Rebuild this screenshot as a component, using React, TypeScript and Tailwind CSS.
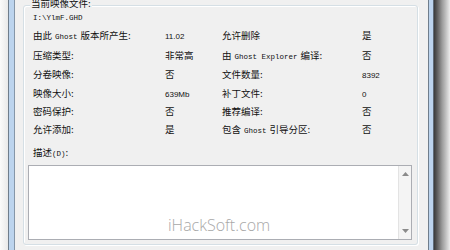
import type { ReactNode } from "react";

const Mono = ({ children }: { children: ReactNode }) => (
  <span className="font-['Liberation_Mono',monospace] text-[7.5px]">{children}</span>
);

const Num = ({ children }: { children: ReactNode }) => (
  <span className="font-['Liberation_Sans',sans-serif] text-[8px]">{children}</span>
);

const Word = ({ children }: { children: ReactNode }) => (
  <span className="mx-[3px] font-['Liberation_Mono',monospace] text-[7.5px]">{children}</span>
);

const rows: [ReactNode, ReactNode, ReactNode, ReactNode][] = [
  [<>由此<Word>Ghost</Word>版本所产生:</>, <Num>11.02</Num>, "允许删除", "是"],
  ["压缩类型:", "非常高", <>由<Word>Ghost Explorer</Word>编译:</>, "否"],
  ["分卷映像:", "否", "文件数量:", <Num>8392</Num>],
  ["映像大小:", <Num>639Mb</Num>, "补丁文件:", <Num>0</Num>],
  ["密码保护:", "否", "推荐编译:", "否"],
  ["允许添加:", "是", <>包含<Word>Ghost</Word>引导分区:</>, "否"],
];

const Arrow = ({ up }: { up?: boolean }) => (
  <svg width="7" height="4" viewBox="0 0 7 4">
    <path d={up ? "M0 4 L3.5 0 L7 4 Z" : "M0 0 L3.5 4 L7 0 Z"} fill="#8a8a8a" />
  </svg>
);

const App = () => {
  return (
    <div className="flex h-[250px] w-[450px] overflow-hidden bg-[#f0f0f0] font-['Noto_Sans_CJK_SC',sans-serif] text-[9.5px] text-[#111]">
      {/* left window frame */}
      <div className="w-[8px] bg-gradient-to-r from-[#fbfbfb] to-[#e9e9e9]" />
      <div className="w-[1px] bg-[#6f7d8c]" />
      <div className="w-[5px] bg-[#bcd4ee]" />
      <div className="w-[1px] bg-[#8596a8]" />

      <div className="flex w-[413px] flex-col pl-[8px] pr-[10px]">
        <div className="relative mt-[5px] rounded-[3px] border border-[#d5dfe5] pb-[4px] pt-[2px] shadow-[inset_1px_1px_0_#fff,1px_1px_0_#fff]">
          <span className="absolute left-[6px] top-[-9px] bg-[#f0f0f0] px-[1px] leading-[12px]">当前映像文件:</span>

          <div className="pl-[9px] leading-[17px]">
            <Mono>I:\YlmF.GHD</Mono>
          </div>

          <div className="grid grid-cols-[132px_57px_140px_1fr] pl-[9px] leading-[17.5px]">
            {rows.map((r, i) => (
              <div key={i} className="contents">
                <div>{r[0]}</div>
                <div>{r[1]}</div>
                <div>{r[2]}</div>
                <div>{r[3]}</div>
              </div>
            ))}
          </div>

          <div className="mt-[4px] pl-[9px] leading-[17.5px]">
            描述<Mono>(D)</Mono>:
          </div>

          <div className="ml-[4px] mr-[5px] mt-[1.5px] flex h-[75px] border border-[#abadb3] bg-white">
            <div className="flex flex-1 flex-col justify-end pb-[5px] pl-[139px]">
              <span className="font-['Open_Sans',sans-serif] text-[16px] font-light leading-[18px] text-[#a8a8a8]">
                iHackSoft.com
              </span>
            </div>
            <div className="flex w-[13px] flex-col items-center justify-between border-l border-[#e3e3e3] bg-[#f4f4f4] py-[6px]">
              <Arrow up />
              <Arrow />
            </div>
          </div>
        </div>

        <div className="mt-[9px] flex justify-end gap-[4px]">
          <button className="h-[21px] w-[55px] rounded-[3px] border border-[#3c7fb1] bg-gradient-to-b from-[#f4f9fd] to-[#d9e9f5] pt-[1px] leading-[16px] shadow-[inset_0_0_0_1px_#8ad2f7]">
            确定
          </button>
          <button className="h-[21px] w-[56px] rounded-[3px] border border-[#707070] bg-gradient-to-b from-[#f2f2f2] to-[#dcdcdc] pt-[1px] leading-[16px]">
            取消
          </button>
        </div>
      </div>

      {/* right window frame and shadow */}
      <div className="w-[1px] bg-[#6f7d8c]" />
      <div className="w-[4px] bg-[#bcd4ee]" />
      <div className="w-[1px] bg-[#5f6b78]" />
      <div className="flex-1 bg-gradient-to-r from-[#3a3a3a] via-[#9a9a9a] to-[#ececec]" />
    </div>
  );
};

export default App;
